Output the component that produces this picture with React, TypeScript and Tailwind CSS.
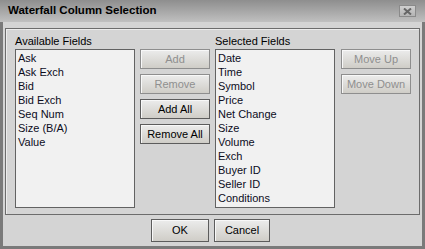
import React from "react";

const available = ["Ask", "Ask Exch", "Bid", "Bid Exch", "Seq Num", "Size (B/A)", "Value"];
const selected = [
  "Date",
  "Time",
  "Symbol",
  "Price",
  "Net Change",
  "Size",
  "Volume",
  "Exch",
  "Buyer ID",
  "Seller ID",
  "Conditions",
];

function Btn({ label, disabled, className = "" }: { label: string; disabled?: boolean; className?: string }) {
  return (
    <button
      className={`flex items-center justify-center border bg-gradient-to-b from-[#ececec] to-[#cfcdc7] shadow-[inset_1px_1px_0_#f8f8f8] leading-none ${
        disabled ? "border-[#8e8e8e] text-[#8f8f8f]" : "border-[#5c5c5c] text-black"
      } ${className}`}
    >
      {label}
    </button>
  );
}

function FieldList({ items }: { items: string[] }) {
  return (
    <div className="w-[120px] h-[159px] bg-[#f1f1f1] border border-[#626262] pl-[2px] pt-[1px]">
      {items.map((item) => (
        <div key={item} className="h-[14px] leading-[14px] text-[#0c0c1c]">
          {item}
        </div>
      ))}
    </div>
  );
}

export default function App() {
  return (
    <div
      className="w-[425px] h-[249px] flex flex-col bg-[#7a7a7a] text-[11px]"
      style={{ fontFamily: '"Liberation Sans", Arial, sans-serif' }}
    >
      {/* Title bar */}
      <div className="h-[22px] flex items-center justify-between pl-[8px] pr-[9px] bg-gradient-to-b from-[#8e8e8e] to-[#c0c0c0]">
        <span className="font-bold text-[11.5px] text-black">Waterfall Column Selection</span>
        <div className="w-[17px] h-[12px] border border-[#8a8a8a] bg-gradient-to-b from-[#cfcfcf] to-[#b4b4b4] flex items-center justify-center">
          <svg width="9" height="7" viewBox="0 0 9 7">
            <path d="M1 0.5 L8 6.5 M8 0.5 L1 6.5" stroke="#666" strokeWidth="2" />
          </svg>
        </div>
      </div>

      {/* Body */}
      <div className="flex-1 mx-[3px] mb-[3px] bg-[#d4d4d4] flex flex-col px-[2px] pt-[6px]">
        <div className="border border-[#6c6c6c] shadow-[inset_1px_1px_0_#ececec] pl-[9px] pt-[5px] pb-[6px] flex gap-[5px]">
          <div className="flex flex-col">
            <div className="h-[15px] leading-[15px] text-black">Available Fields</div>
            <FieldList items={available} />
          </div>
          <div className="flex flex-col gap-[5px] pt-[15px]">
            <Btn label="Add" disabled className="w-[70px] h-[20px]" />
            <Btn label="Remove" disabled className="w-[70px] h-[20px]" />
            <Btn label="Add All" className="w-[70px] h-[20px]" />
            <Btn label="Remove All" className="w-[70px] h-[20px]" />
          </div>
          <div className="flex flex-col">
            <div className="h-[15px] leading-[15px] text-black">Selected Fields</div>
            <FieldList items={selected} />
          </div>
          <div className="flex flex-col gap-[5px] pt-[15px] ml-[1px]">
            <Btn label="Move Up" disabled className="w-[70px] h-[20px]" />
            <Btn label="Move Down" disabled className="w-[70px] h-[20px]" />
          </div>
        </div>
        <div className="flex justify-center gap-[5px] pt-[4px] pr-[4px]">
          <Btn label="OK" className="w-[58px] h-[23px]" />
          <Btn label="Cancel" className="w-[56px] h-[23px]" />
        </div>
      </div>
    </div>
  );
}
